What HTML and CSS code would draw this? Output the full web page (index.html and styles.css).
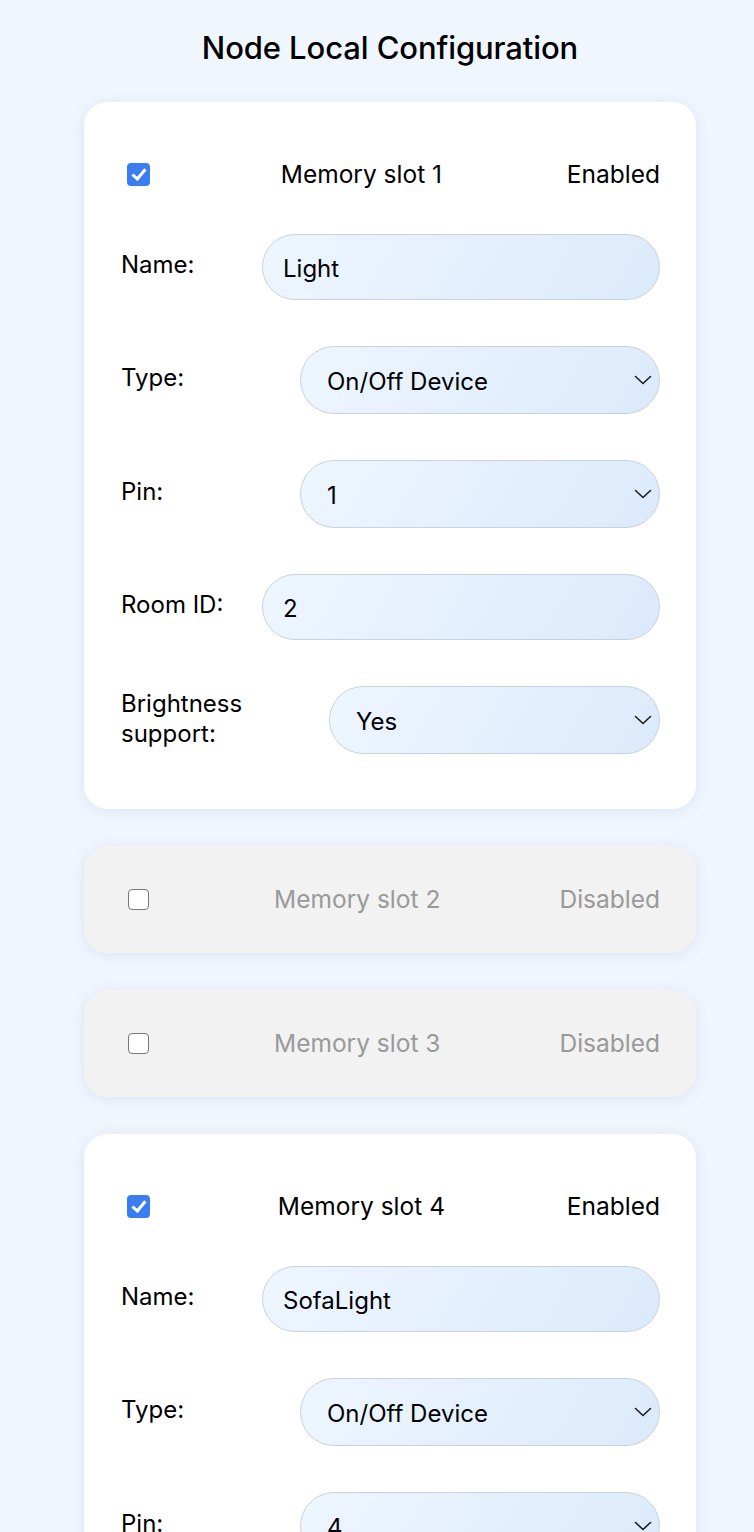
FILE: index.html
```html
<!DOCTYPE html>
<html lang="en">
<head>
<meta charset="utf-8">
<title>Node Local Configuration</title>
<link rel="stylesheet" href="styles.css">
</head>
<body>
<main class="page">
  <h1 class="title">Node Local Configuration</h1>

  <section class="card card--enabled">
    <div class="card-head">
      <input type="checkbox" class="toggle" checked>
      <span class="slot-name">Memory slot 1</span>
      <span class="slot-state">Enabled</span>
    </div>
    <div class="field">
      <label class="field-label">Name:</label>
      <input class="pill pill--input" type="text" value="Light">
    </div>
    <div class="field">
      <label class="field-label">Type:</label>
      <span class="select-wrap">
        <select class="pill pill--select"><option>On/Off Device</option></select>
        <svg class="chevron" viewBox="0 0 18 10" width="18" height="10"><path d="M1.5 1.5 L9 8.5 L16.5 1.5" fill="none" stroke="#1d1d1f" stroke-width="1.6" stroke-linecap="round" stroke-linejoin="round"/></svg>
      </span>
    </div>
    <div class="field">
      <label class="field-label">Pin:</label>
      <span class="select-wrap">
        <select class="pill pill--select"><option>1</option></select>
        <svg class="chevron" viewBox="0 0 18 10" width="18" height="10"><path d="M1.5 1.5 L9 8.5 L16.5 1.5" fill="none" stroke="#1d1d1f" stroke-width="1.6" stroke-linecap="round" stroke-linejoin="round"/></svg>
      </span>
    </div>
    <div class="field">
      <label class="field-label">Room ID:</label>
      <input class="pill pill--input" type="text" value="2">
    </div>
    <div class="field">
      <label class="field-label field-label--wrap">Brightness support:</label>
      <span class="select-wrap select-wrap--narrow">
        <select class="pill pill--select"><option>Yes</option></select>
        <svg class="chevron" viewBox="0 0 18 10" width="18" height="10"><path d="M1.5 1.5 L9 8.5 L16.5 1.5" fill="none" stroke="#1d1d1f" stroke-width="1.6" stroke-linecap="round" stroke-linejoin="round"/></svg>
      </span>
    </div>
  </section>

  <section class="card card--disabled">
    <div class="card-head">
      <input type="checkbox" class="toggle">
      <span class="slot-name">Memory slot 2</span>
      <span class="slot-state">Disabled</span>
    </div>
  </section>

  <section class="card card--disabled">
    <div class="card-head">
      <input type="checkbox" class="toggle">
      <span class="slot-name">Memory slot 3</span>
      <span class="slot-state">Disabled</span>
    </div>
  </section>

  <section class="card card--enabled">
    <div class="card-head">
      <input type="checkbox" class="toggle" checked>
      <span class="slot-name">Memory slot 4</span>
      <span class="slot-state">Enabled</span>
    </div>
    <div class="field">
      <label class="field-label">Name:</label>
      <input class="pill pill--input" type="text" value="SofaLight">
    </div>
    <div class="field">
      <label class="field-label">Type:</label>
      <span class="select-wrap">
        <select class="pill pill--select"><option>On/Off Device</option></select>
        <svg class="chevron" viewBox="0 0 18 10" width="18" height="10"><path d="M1.5 1.5 L9 8.5 L16.5 1.5" fill="none" stroke="#1d1d1f" stroke-width="1.6" stroke-linecap="round" stroke-linejoin="round"/></svg>
      </span>
    </div>
    <div class="field">
      <label class="field-label">Pin:</label>
      <span class="select-wrap">
        <select class="pill pill--select"><option>4</option></select>
        <svg class="chevron" viewBox="0 0 18 10" width="18" height="10"><path d="M1.5 1.5 L9 8.5 L16.5 1.5" fill="none" stroke="#1d1d1f" stroke-width="1.6" stroke-linecap="round" stroke-linejoin="round"/></svg>
      </span>
    </div>
  </section>
</main>
</body>
</html>
```

FILE: styles.css
```css
* { box-sizing: border-box; }

html, body {
  margin: 0;
  padding: 0;
  background: #f0f6fe;
}

body {
  font-family: Inter, "Noto Sans", "Liberation Sans", sans-serif;
  color: #000;
  padding: 30px 0 40px 26px;
}

.page {
  width: 612px;
  margin: 0 auto;
  display: flex;
  flex-direction: column;
  gap: 37px;
}

.title {
  margin: 0 0 -1px;
  text-align: center;
  font-size: 31px;
  line-height: 36px;
  font-weight: 500;
  letter-spacing: -0.1px;
}

.card {
  border-radius: 24px;
  background: #fff;
  box-shadow: 0 2px 14px rgba(40, 80, 140, 0.10);
  display: flex;
  flex-direction: column;
  gap: 46px;
  padding: 40px 36px 40px 37px;
}

.card--enabled {
  padding-top: 59px;
  padding-bottom: 55px;
}

.card--disabled {
  background: #f2f2f2;
  color: #999;
  padding-top: 40px;
  padding-bottom: 40px;
}

.card-head {
  display: flex;
  align-items: center;
  justify-content: space-between;
  height: 27px;
  font-size: 24.5px;
  line-height: 27px;
}

.toggle {
  appearance: none;
  -webkit-appearance: none;
  position: relative;
  margin: 0 0 0 6px;
  width: 23px;
  height: 23px;
  border-radius: 4px;
  background: #fff;
  border: 1.5px solid #777;
  flex: none;
}

.toggle:checked {
  background: #3a7cf1;
  border: none;
}

.toggle:checked::after {
  content: "";
  position: absolute;
  left: 8px;
  top: 3px;
  width: 5px;
  height: 11px;
  border-right: 3px solid #fff;
  border-bottom: 3px solid #fff;
  transform: rotate(40deg);
}

.card--disabled .toggle {
  width: 21px;
  height: 21px;
  margin-left: 7px;
}

.slot-name {
  padding-left: 6px;
}

.field {
  display: flex;
  align-items: center;
  justify-content: space-between;
  gap: 10px;
}

.field-label {
  font-size: 24px;
  line-height: 30px;
  margin-top: -4px;
  white-space: nowrap;
}

.field-label--wrap {
  white-space: normal;
  margin-top: -2px;
}

.pill {
  font-family: inherit;
  font-size: 24px;
  color: #000;
  border: 1px solid #c9d2dc;
  border-radius: 34px;
  background: linear-gradient(120deg, #eef6ff 0%, #dbeafb 100%);
  outline: none;
  margin: 0;
}

.pill--input {
  width: 398px;
  height: 66px;
  padding: 2px 20px 0;
  flex: none;
}

.select-wrap {
  position: relative;
  display: block;
  width: 360px;
  flex: none;
}

.select-wrap--narrow {
  width: 331px;
}

.pill--select {
  appearance: none;
  -webkit-appearance: none;
  display: block;
  width: 100%;
  height: 68px;
  padding: 2px 50px 0 26px;
}

.chevron {
  position: absolute;
  right: 8px;
  top: 29px;
  pointer-events: none;
}
```
